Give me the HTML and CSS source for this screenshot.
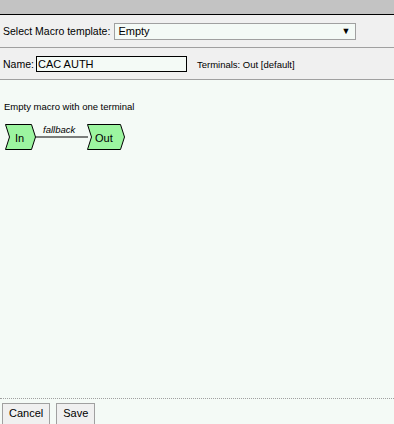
FILE: index.html
```html
<!DOCTYPE html>
<html lang="en">
<head>
    <meta charset="UTF-8">
    <title>New Macro</title>
    <link rel="stylesheet" href="styles.css">
</head>
<body>
    <div class="page">
        <div class="topbar"></div>

        <div class="row">
            <label class="label" for="template">Select Macro template:</label>
            <div class="select" id="template">
                <span>Empty</span>
                <span class="arrow">&#9660;</span>
            </div>
        </div>

        <div class="row row-name">
            <label class="label" for="macro-name">Name:</label>
            <input type="text" id="macro-name" class="name-input" value="CAC AUTH">
            <span class="terminals">Terminals: Out [default]</span>
        </div>

        <div class="content">
            <p class="desc">Empty macro with one terminal</p>

            <!-- macro diagram -->
            <svg class="diagram" width="130" height="30" viewBox="0 0 130 30">
                <polygon points="0.5,0.5 26.5,0.5 30.5,13 26.5,25.5 0.5,25.5 4.5,13" fill="#9cf5a0" stroke="#000"/>
                <text x="10" y="17.5" class="node-text">In</text>
                <line x1="30.5" y1="13" x2="83" y2="13" stroke="#000"/>
                <text x="38" y="9" class="edge-text">fallback</text>
                <polygon points="82.5,0.5 115.5,0.5 119.5,13 115.5,25.5 82.5,25.5 86.5,13" fill="#9cf5a0" stroke="#000"/>
                <text x="90" y="17.5" class="node-text">Out</text>
            </svg>
        </div>

        <div class="footer">
            <button class="btn">Cancel</button>
            <button class="btn">Save</button>
        </div>
    </div>
</body>
</html>
```

FILE: styles.css
```css
html, body {
    height: 100%;
}
body {
    margin: 0;
    font-family: "Liberation Sans", Arial, sans-serif;
    font-size: 11px;
    color: #000;
    background-color: #f4faf6;
    overflow: hidden;
}
.page {
    display: flex;
    flex-direction: column;
    height: 424px;
}
.topbar {
    height: 14px;
    background-color: #c3c3c3;
    border-bottom: 1px solid #000;
}
.row {
    display: flex;
    align-items: center;
    height: 32px;
    padding-left: 3px;
    background-color: #f0f0f0;
    border-bottom: 1px solid #a0a0a0;
}
.row-name {
    height: 30px;
    padding-top: 1px;
}
.label {
    margin-right: 4px;
    font-size: 10.5px;
}
.row-name .label {
    margin-right: 2px;
}
.select {
    display: flex;
    justify-content: space-between;
    align-items: center;
    box-sizing: border-box;
    width: 242px;
    height: 17px;
    padding: 0 5px 0 3px;
    background-color: #f4faf6;
    border: 1px solid #a0a0a0;
}
.arrow {
    font-size: 9px;
}
.name-input {
    box-sizing: border-box;
    width: 151px;
    height: 16px;
    margin: 0;
    padding: 0 1px;
    font-family: inherit;
    font-size: 11px;
    background-color: #f4faf6;
    border: 1px solid #000;
    outline: none;
}
.terminals {
    margin-left: 10px;
    font-size: 9.5px;
}
.content {
    flex: 1;
    padding: 21px 0 0 4px;
}
.desc {
    margin: 0 0 12px 0;
    font-size: 9.5px;
}
.diagram {
    display: block;
    margin-left: 1px;
}
.node-text {
    font-family: "Liberation Sans", Arial, sans-serif;
    font-size: 11px;
}
.edge-text {
    font-family: "Liberation Sans", Arial, sans-serif;
    font-size: 9.5px;
    font-style: italic;
}
.footer {
    display: flex;
    gap: 6px;
    height: 21px;
    padding: 4px 0 0 2px;
    border-top: 1px dotted #a0a0a0;
}
.btn {
    height: 22px;
    padding: 0 6px 2px;
    font-family: inherit;
    font-size: 11px;
    background-color: #f0f0f0;
    border: 1px solid #a0a0a0;
    border-radius: 0;
}
```
